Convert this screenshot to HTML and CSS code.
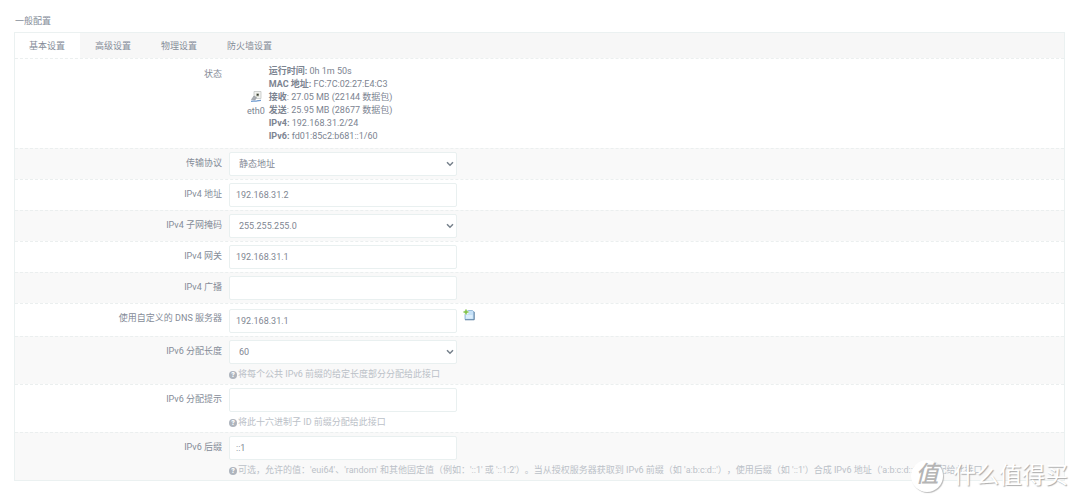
FILE: index.html
```html
<!DOCTYPE html>
<html lang="zh-CN">
<head>
<meta charset="utf-8">
<title>一般配置</title>
<link rel="stylesheet" href="styles.css">
</head>
<body>
<main class="page">
  <h1 class="title">一般配置</h1>
  <form class="panel">
    <nav class="tabs">
      <a class="tab tab-active" href="#general">基本设置</a>
      <a class="tab" href="#advanced">高级设置</a>
      <a class="tab" href="#physical">物理设置</a>
      <a class="tab" href="#firewall">防火墙设置</a>
    </nav>

    <section class="row row-status">
      <span class="label">状态</span>
      <div class="status">
        <div class="iface">
          <svg class="iface-icon" viewBox="0 0 12 12" aria-hidden="true">
            <path d="M4 .5h7v7H4z" fill="#f0f1ee" stroke="#c3c6c4" stroke-width=".8"/>
            <path d="M6 2.500h3v3H6z" fill="#bfc2b4"/>
            <path d="M6.800 2.800h1.800v1.800H6.800z" fill="#34382f"/>
            <path d="M4 5l2.500 1.500-1.500 2.500-3.500-.5z" fill="#a9adb2" stroke="#8d9298" stroke-width=".6"/>
            <path d="M1 10.300c3-.6 4 .2 6-.4 1.500-.5 2-.6 4-.6" fill="none" stroke="#6f9bd0" stroke-width="1.300"/>
          </svg>
          <span>eth0</span>
        </div>
        <div class="facts">
          <div><b>运行时间:</b> 0h 1m 50s</div>
          <div><b>MAC 地址:</b> FC:7C:02:27:E4:C3</div>
          <div><b>接收</b>: 27.05 MB (22144 数据包)</div>
          <div><b>发送</b>: 25.95 MB (28677 数据包)</div>
          <div><b>IPv4:</b> 192.168.31.2/24</div>
          <div><b>IPv6:</b> fd01:85c2:b681::1/60</div>
        </div>
      </div>
    </section>

    <div class="row">
      <label class="label" for="proto">传输协议</label>
      <div class="field">
        <div class="select">
          <select class="control" id="proto"><option>静态地址</option></select>
          <svg class="chevron" viewBox="0 0 8 6" aria-hidden="true"><path d="M1 1.200l3 3 3-3"/></svg>
        </div>
      </div>
    </div>
    <div class="row">
      <label class="label" for="ipaddr">IPv4 地址</label>
      <div class="field"><input class="control" id="ipaddr" type="text" value="192.168.31.2"></div>
    </div>
    <div class="row">
      <label class="label" for="netmask">IPv4 子网掩码</label>
      <div class="field">
        <div class="select">
          <select class="control" id="netmask"><option>255.255.255.0</option></select>
          <svg class="chevron" viewBox="0 0 8 6" aria-hidden="true"><path d="M1 1.200l3 3 3-3"/></svg>
        </div>
      </div>
    </div>
    <div class="row">
      <label class="label" for="gateway">IPv4 网关</label>
      <div class="field"><input class="control" id="gateway" type="text" value="192.168.31.1"></div>
    </div>
    <div class="row">
      <label class="label" for="broadcast">IPv4 广播</label>
      <div class="field"><input class="control" id="broadcast" type="text"></div>
    </div>
    <div class="row row-dns">
      <label class="label" for="dns">使用自定义的 DNS 服务器</label>
      <div class="field field-list">
        <input class="control" id="dns" type="text" value="192.168.31.1">
        <button class="add" type="button" aria-label="添加">
          <svg viewBox="0 0 12 12" aria-hidden="true">
            <path d="M2 1.500h7.500l1.500 1.500v7.500H2z" fill="#c5e1f8" stroke="#86aed2" stroke-width=".8"/>
            <path d="M3 6h6.500v3.500H3z" fill="#dceefc"/>
            <path d="M11.200 2.800v8H2" fill="none" stroke="#5f7f9f" stroke-width=".9"/>
            <path d="M3 .6v5M.5 3.100h5" stroke="#fff" stroke-width="2.600"/>
            <path d="M3 .6v5M.5 3.100h5" stroke="#7cc043" stroke-width="1.500"/>
          </svg>
        </button>
      </div>
    </div>
    <div class="row">
      <label class="label" for="ip6assign">IPv6 分配长度</label>
      <div class="field">
        <div class="select">
          <select class="control" id="ip6assign"><option>60</option></select>
          <svg class="chevron" viewBox="0 0 8 6" aria-hidden="true"><path d="M1 1.200l3 3 3-3"/></svg>
        </div>
        <p class="hint"><span class="help">?</span>将每个公共 IPv6 前缀的给定长度部分分配给此接口</p>
      </div>
    </div>
    <div class="row">
      <label class="label" for="ip6hint">IPv6 分配提示</label>
      <div class="field">
        <input class="control" id="ip6hint" type="text">
        <p class="hint"><span class="help">?</span>将此十六进制子 ID 前缀分配给此接口</p>
      </div>
    </div>
    <div class="row">
      <label class="label" for="ip6ifaceid">IPv6 后缀</label>
      <div class="field">
        <input class="control" id="ip6ifaceid" type="text" value="::1">
        <p class="hint"><span class="help">?</span>可选，允许的值：'eui64'、'random' 和其他固定值（例如：'::1' 或 '::1:2'）。当从授权服务器获取到 IPv6 前缀（如 'a:b:c:d::'），使用后缀（如 '::1'）合成 IPv6 地址（'a:b:c:d::1'）分配给此接口</p>
      </div>
    </div>
  </form>
  <div class="watermark">
    <span class="seal">值</span>
    <span class="brand">什么值得买</span>
  </div>
</main>
</body>
</html>
```

FILE: styles.css
```css
* {
  box-sizing: border-box;
}

body {
  margin: 0;
  background: #fff;
  color: #858c98;
  font-family: Roboto, "Noto Sans CJK SC", sans-serif;
  font-size: 9px;
  line-height: 13px;
  text-spacing-trim: space-all;
}

.page {
  position: relative;
  padding: 15px 15px 21px 14px;
}

.title {
  margin: 0 0 4px 1px;
  font-size: 9px;
  font-weight: 400;
}

.panel {
  border: 1px solid #ebf1f1;
}

.tabs {
  display: flex;
  background: #f7f7f7;
}

.tab {
  padding: 7px 14px 5px;
  margin-right: 2px;
  color: inherit;
  text-decoration: none;
}

.tab-active {
  margin-right: 1px;
  padding-right: 15px;
  background: #fff;
}

.row {
  display: flex;
  gap: 7px;
  padding: 3px 0;
  border-top: 1px dashed #ebefef;
}

.row:nth-child(odd) {
  background: #f9f9f9;
}

.label {
  flex: 0 0 207px;
  padding-top: 5px;
  text-align: right;
}

.row-status {
  padding: 6px 0 5px;
}

.row-status .label {
  padding-top: 3px;
}

.status {
  display: flex;
  align-items: center;
  gap: 4px;
  padding-left: 18px;
  color: #7c8491;
}

.iface {
  display: flex;
  flex-direction: column;
  align-items: center;
}

.iface-icon {
  width: 12px;
  height: 12px;
  margin-bottom: 2px;
}

.facts b {
  font-weight: 700;
}

.field {
  flex: 1;
  min-width: 0;
}

.field-list {
  display: flex;
  align-items: center;
  gap: 6px;
}

.row-dns {
  padding: 5px 0 3px;
}

.row-dns .label {
  padding-top: 3px;
}

.control {
  display: block;
  width: 228px;
  height: 24px;
  margin: 0;
  padding: 0 6px;
  border: 1px solid #e9f0f0;
  border-radius: 2px;
  background: #fff;
  color: #7f8793;
  font: inherit;
  appearance: none;
}

.select {
  position: relative;
  width: 228px;
}

.select .control {
  padding-left: 9px;
}

.chevron {
  position: absolute;
  top: 9px;
  right: 3px;
  width: 8px;
  height: 6px;
  fill: none;
  stroke: #76808b;
  stroke-width: 1.500;
  pointer-events: none;
}

.add {
  align-self: flex-start;
  width: 12px;
  height: 12px;
  padding: 0;
  border: 0;
  background: none;
}

.add svg {
  display: block;
  width: 12px;
  height: 12px;
}

.hint {
  display: flex;
  align-items: center;
  gap: 1px;
  margin: 4px 0 0;
  color: #bbc1c8;
  white-space: nowrap;
}

.help {
  width: 8px;
  height: 8px;
  border-radius: 50%;
  background: #aeb4bd;
  color: #fff;
  font-size: 7px;
  font-weight: 900;
  line-height: 8px;
  text-align: center;
}

.watermark {
  position: absolute;
  right: 12px;
  bottom: 10px;
  display: flex;
  align-items: center;
  gap: 10px;
}

.seal {
  width: 32px;
  height: 32px;
  border-radius: 50%;
  background: #fff;
  box-shadow: 1px 1px 1px #bbb;
  color: #b5b5b5;
  font-size: 23px;
  font-style: italic;
  font-weight: 500;
  line-height: 30px;
  text-align: center;
}

.brand {
  color: #fff;
  font-size: 23px;
  line-height: 32px;
  text-shadow: 1px 1px 1px #aaa;
}
```
